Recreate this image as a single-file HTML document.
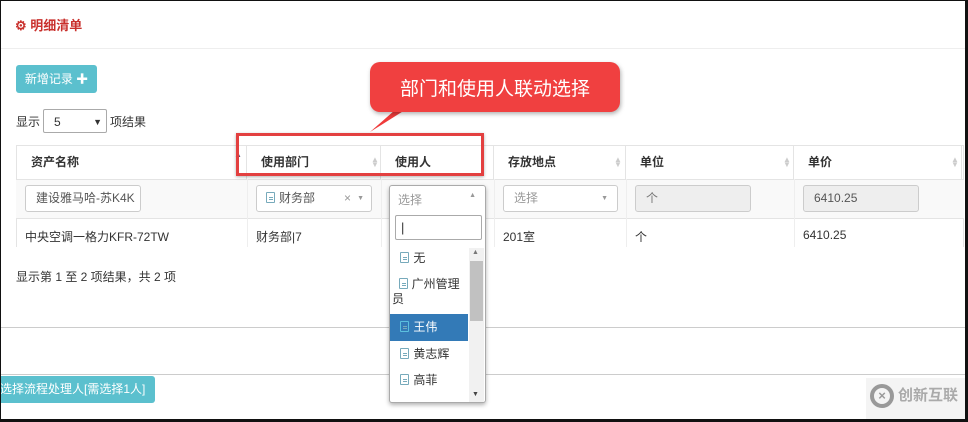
<!DOCTYPE html>
<html><head><meta charset="utf-8"><style>
*{box-sizing:border-box;margin:0;padding:0}
body{width:968px;height:422px;overflow:hidden;background:#fff;font-family:"Liberation Sans","Noto Sans CJK SC",sans-serif;font-size:12px;color:#333;position:relative}
.a{position:absolute}
.frame{left:0;top:0;width:968px;height:422px;border:1px solid #111;border-right:3px solid #111;border-bottom:3px solid #111}
.hl{height:1px;background:#ccc;left:1px;right:3px}
.th{font-weight:bold;top:145px;height:34px;line-height:34px;border-right:1px solid #e4e4e4}
.inp{border:1px solid #ccc;border-radius:3px;height:27px;line-height:25px;padding-left:10px;font-size:12px}
.doc{display:inline-block;width:9px;height:11px;border:1px solid #7ab;border-radius:1px;vertical-align:-1px;margin-right:4px;background:linear-gradient(#7ab,#7ab) 2px 4px/4px 1px no-repeat,linear-gradient(#7ab,#7ab) 2px 6px/4px 1px no-repeat}
.sort{color:#ccc;font-size:8px;line-height:5px;width:8px;text-align:center}
</style></head><body>
<div class="a" style="left:15px;top:15px;color:#c9302c;font-size:13px;font-weight:bold">⚙ 明细清单</div>
<div class="a hl" style="top:48px;background:#eee"></div>
<div class="a" style="left:16px;top:65px;width:81px;height:28px;background:#5bc0ce;border-radius:3px;color:#fff;line-height:28px;text-align:center;font-size:12px">新增记录 ✚</div>
<div class="a" style="left:16px;top:113px">显示</div>
<div class="a" style="left:43px;top:109px;width:64px;height:24px;border:1px solid #aaa;border-radius:2px;padding-left:10px;line-height:24px">5<span style="position:absolute;right:4px;font-size:9px">▼</span></div>
<div class="a" style="left:110px;top:113px">项结果</div>
<!-- table -->
<div class="a" style="left:16px;top:145px;width:948px;height:102px;border:1px solid #e4e4e4;border-bottom:none"></div>
<div class="a" style="left:16px;top:179px;width:948px;height:40px;background:#f9f9f9;border-top:1px solid #e4e4e4;border-bottom:1px solid #e4e4e4"></div>
<div class="a th" style="left:16px;width:231px;padding-left:15px">资产名称<span class="a" style="right:4px;top:0;color:#557;font-size:8px;line-height:20px">▲</span></div>
<div class="a th" style="left:247px;width:134px;padding-left:14px">使用部门</div>
<div class="a th" style="left:381px;width:113px;padding-left:14px">使用人</div>
<div class="a th" style="left:494px;width:132px;padding-left:14px">存放地点</div>
<div class="a th" style="left:626px;width:168px;padding-left:14px">单位</div>
<div class="a th" style="left:794px;width:168px;padding-left:14px">单价</div>
<div class="a" style="left:247px;top:179px;width:1px;height:68px;background:#eee"></div>
<div class="a" style="left:381px;top:179px;width:1px;height:68px;background:#eee"></div>
<div class="a" style="left:494px;top:179px;width:1px;height:68px;background:#eee"></div>
<div class="a" style="left:626px;top:179px;width:1px;height:68px;background:#eee"></div>
<div class="a" style="left:794px;top:179px;width:1px;height:68px;background:#eee"></div>
<div class="a sort" style="left:371px;top:157px">▲<br>▼</div>
<div class="a sort" style="left:614px;top:157px">▲<br>▼</div>
<div class="a sort" style="left:783px;top:157px">▲<br>▼</div>
<div class="a sort" style="left:951px;top:157px">▲<br>▼</div>
<div class="a inp" style="left:25px;top:185px;width:116px;background:#fff;color:#555;overflow:hidden;white-space:nowrap">建设雅马哈-苏K4K</div>
<div class="a inp" style="left:256px;top:185px;width:116px;background:#fff;color:#555;padding-left:9px"><span class="doc"></span>财务部<span class="a" style="right:20px;color:#999">×</span><span class="a" style="right:7px;color:#999;font-size:7px">▼</span></div>
<div class="a inp" style="left:503px;top:185px;width:115px;background:#fff;color:#999">选择<span class="a" style="right:9px;font-size:7px">▼</span></div>
<div class="a inp" style="left:635px;top:185px;width:116px;background:#eee;color:#777">个</div>
<div class="a inp" style="left:803px;top:185px;width:116px;background:#eee;color:#555">6410.25</div>
<div class="a" style="left:25px;top:228px">中央空调一格力KFR-72TW</div>
<div class="a" style="left:256px;top:228px">财务部|7</div>
<div class="a" style="left:503px;top:228px">201室</div>
<div class="a" style="left:635px;top:228px">个</div>
<div class="a" style="left:803px;top:228px">6410.25</div>
<div class="a" style="left:16px;top:268px">显示第 1 至 2 项结果，共 2 项</div>
<div class="a hl" style="top:327px"></div>
<div class="a hl" style="top:374px"></div>
<div class="a" style="left:0;top:376px;width:155px;height:27px;background:#5bc0ce;border-radius:0 3px 3px 0;color:#fff;line-height:27px;font-size:12px;white-space:nowrap">选择流程处理人[需选择1人]</div>
<!-- dropdown -->
<div class="a" style="left:389px;top:185px;width:97px;height:218px;background:#fff;border:1px solid #aaa;border-radius:3px;box-shadow:0 2px 4px rgba(0,0,0,.3);overflow:hidden">
 <div class="a" style="left:8px;top:5px;color:#999">选择</div>
 <div class="a" style="right:9px;top:6px;color:#999;font-size:7px">▲</div>
 <div class="a" style="left:5px;top:29px;width:87px;height:25px;border:1px solid #aaa;border-radius:2px;padding:4px 0 0 5px;font-size:13px;line-height:15px">|</div>
 <div class="a" style="left:0;top:62px;width:78px;font-size:12px;line-height:15px">
  <div style="padding:3px 7px 8px">&nbsp;<span class="doc"></span>无</div>
  <div style="padding:3px 7px 7px 2px;line-height:15px">&nbsp;&nbsp;<span class="doc"></span>广州管理<br>员</div>
  <div style="background:#337ab7;color:#fff;padding:6px 7px 6px">&nbsp;<span class="doc" style="border-color:#5bc0de"></span>王伟</div>
  <div style="padding:6px 7px">&nbsp;<span class="doc"></span>黄志辉</div>
  <div style="padding:5px 7px">&nbsp;<span class="doc"></span>高菲</div>
 </div>
 <div class="a" style="left:79px;top:62px;width:15px;height:154px;background:#f1f1f1"></div>
 <div class="a" style="left:80px;top:75px;width:13px;height:60px;background:#c1c1c1"></div>
 <div class="a" style="left:82px;top:63px;font-size:7px;color:#777">▲</div>
 <div class="a" style="left:82px;top:205px;font-size:7px;color:#444">▼</div>
</div>
<!-- callout -->
<svg class="a" style="left:355px;top:60px" width="270" height="75"><path d="M15 72 L40 50 L50 50 Z" fill="#ef3b3b"/><rect x="15" y="2" width="250" height="50" rx="10" fill="#f04040" style="filter:drop-shadow(1px 2px 2px rgba(0,0,0,.3))"/></svg>
<div class="a" style="left:370px;top:74px;width:250px;text-align:center;color:#fff;font-size:19px">部门和使用人联动选择</div>
<div class="a" style="left:236px;top:133px;width:248px;height:43px;border:3px solid #e34040;box-shadow:0 1px 3px rgba(0,0,0,.3)"></div>
<!-- watermark -->
<div class="a" style="left:866px;top:378px;width:100px;height:42px;background:#f4f4f4"></div>
<div class="a" style="left:870px;top:384px;width:24px;height:24px;border:4px solid #999;border-radius:50%;color:#999;font-weight:bold;font-size:13px;line-height:16px;text-align:center">×</div>
<div class="a" style="left:898px;top:384px;color:#aaa;font-size:15px;font-weight:bold">创新互联</div>
<div class="a frame"></div>
</body></html>
